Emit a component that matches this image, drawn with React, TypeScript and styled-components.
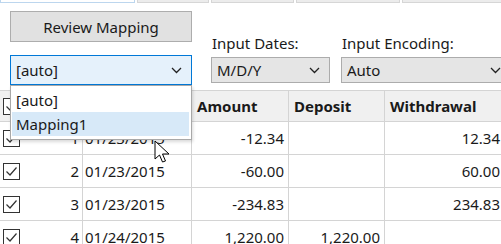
import { FC, Fragment } from "react";
import styled, { createGlobalStyle } from "styled-components";

const GlobalStyle = createGlobalStyle`
  html, body {
    margin: 0;
    padding: 0;
    background: #fff;
    overflow: hidden;
  }
  body {
    font-family: "Noto Sans", "Open Sans", "Liberation Sans", sans-serif;
    font-size: 15px;
    color: #1a1a1a;
  }
`;

const Window = styled.div`
  position: relative;
  width: 501px;
  height: 244px;
  overflow: hidden;
  background: #fff;
`;

// bottoms of the controls cut off above the visible area
const TopStrip = styled.div`
  display: flex;
  height: 4px;
`;

const StripCell = styled.div<{ $w: number; $blue?: boolean }>`
  flex: 0 0 ${(p) => p.$w}px;
  box-sizing: border-box;
  height: 3px;
  background: ${(p) => (p.$blue ? "#fff" : "#ececec")};
  border: 1px solid ${(p) => (p.$blue ? "#bcd6ee" : "#d6d6d6")};
  border-top: none;
  margin-right: 2px;
`;

const Toolbar = styled.div`
  display: flex;
  height: 86px;
  padding-left: 10px;
`;

const LeftColumn = styled.div`
  flex: 0 0 182px;
  display: flex;
  flex-direction: column;
  padding-top: 7px;
  gap: 13px;
`;

const Button = styled.div`
  box-sizing: border-box;
  height: 31px;
  display: flex;
  align-items: center;
  justify-content: center;
  background: #e1e1e1;
  border: 1px solid #adadad;
  font-size: 15px;
`;

const Combo = styled.div<{ $focused?: boolean }>`
  box-sizing: border-box;
  height: ${(p) => (p.$focused ? 30 : 26)}px;
  display: flex;
  align-items: center;
  justify-content: space-between;
  padding: 0 9px 0 5px;
  background: ${(p) => (p.$focused ? "#e5f1fb" : "#e5e5e5")};
  border: 1px solid ${(p) => (p.$focused ? "#0078d7" : "#acacac")};
  font-size: 15px;
`;

const Field = styled.div<{ $w: number; $ml: number }>`
  flex: 0 0 ${(p) => p.$w}px;
  display: flex;
  flex-direction: column;
  margin-left: ${(p) => p.$ml}px;
  padding-top: 28px;
  gap: 3px;
`;

const Label = styled.div`
  font-size: 15px;
  line-height: 22px;
  padding-left: 1px;
`;

const Grid = styled.div`
  display: grid;
  grid-template-columns: 83px 109px 97px 96px 120px;
  border-top: 1px solid #d4d4d4;
`;

const HeadCell = styled.div<{ $pl?: number }>`
  box-sizing: border-box;
  height: 31px;
  display: flex;
  align-items: center;
  padding-left: ${(p) => p.$pl ?? 5}px;
  background: #f0f0f0;
  border-right: 1px solid #d4d4d4;
  border-bottom: 1px solid #d4d4d4;
  font-weight: 700;
  font-size: 15px;
`;

const Cell = styled.div<{ $right?: boolean }>`
  box-sizing: border-box;
  height: 33px;
  display: flex;
  align-items: center;
  justify-content: ${(p) => (p.$right ? "flex-end" : "flex-start")};
  padding: 0 4px 0 2px;
  border-right: 1px solid #d4d4d4;
  border-bottom: 1px solid #d4d4d4;
  font-size: 15px;
  white-space: nowrap;
`;

const RowHead = styled(Cell)`
  justify-content: space-between;
  padding: 0 3px 0 3px;
`;

const DropList = styled.div`
  position: absolute;
  left: 10px;
  top: 85px;
  width: 182px;
  box-sizing: border-box;
  padding: 2px 2px 3px 1px;
  background: #fff;
  border: 1px solid #a8a8a8;
  box-shadow: 1px 2px 3px rgba(0, 0, 0, 0.15);
`;

const DropItem = styled.div<{ $hover?: boolean }>`
  height: 24px;
  display: flex;
  align-items: center;
  padding-left: 4px;
  background: ${(p) => (p.$hover ? "#d7e9f8" : "transparent")};
  font-size: 15px;
`;

const Cursor = styled.svg`
  position: absolute;
  left: 154px;
  top: 140px;
`;

const Chevron: FC = () => (
  <svg width="11" height="7" viewBox="0 0 11 7">
    <path d="M1 1 L5.5 5.5 L10 1" fill="none" stroke="#222" strokeWidth="1.3" />
  </svg>
);

const CheckBox: FC = () => (
  <svg width="17" height="17" viewBox="0 0 17 17">
    <rect x="0.5" y="0.5" width="16" height="16" fill="#fff" stroke="#333" />
    <path d="M3.5 8.5 L7 12 L13.5 4.5" fill="none" stroke="#333" strokeWidth="1.2" />
  </svg>
);

interface IRow {
  n: number;
  date: string;
  amount: string;
  deposit: string;
  withdrawal: string;
}

const ROWS: Array<IRow> = [
  { n: 1, date: "01/23/2015", amount: "-12.34", deposit: "", withdrawal: "12.34" },
  { n: 2, date: "01/23/2015", amount: "-60.00", deposit: "", withdrawal: "60.00" },
  { n: 3, date: "01/23/2015", amount: "-234.83", deposit: "", withdrawal: "234.83" },
  { n: 4, date: "01/24/2015", amount: "1,220.00", deposit: "1,220.00", withdrawal: "" },
];

const App: FC = () => {
  return (
    <Window>
      <GlobalStyle />
      <TopStrip>
        <StripCell $w={135} $blue />
        <StripCell $w={72} />
        <StripCell $w={83} />
        <StripCell $w={104} />
        <StripCell $w={110} />
      </TopStrip>

      <Toolbar>
        <LeftColumn>
          <Button>Review Mapping</Button>
          <Combo $focused>
            <span>[auto]</span>
            <Chevron />
          </Combo>
        </LeftColumn>
        <Field $w={119} $ml={19}>
          <Label>Input Dates:</Label>
          <Combo>
            <span>M/D/Y</span>
            <Chevron />
          </Combo>
        </Field>
        <Field $w={170} $ml={11}>
          <Label>Input Encoding:</Label>
          <Combo>
            <span>Auto</span>
            <Chevron />
          </Combo>
        </Field>
      </Toolbar>

      <Grid>
        <HeadCell $pl={3}>
          <CheckBox />
        </HeadCell>
        <HeadCell>Date</HeadCell>
        <HeadCell>Amount</HeadCell>
        <HeadCell>Deposit</HeadCell>
        <HeadCell>Withdrawal</HeadCell>

        {ROWS.map((row) => (
          <Fragment key={row.n}>
            <RowHead>
              <CheckBox />
              <span>{row.n}</span>
            </RowHead>
            <Cell>{row.date}</Cell>
            <Cell $right>{row.amount}</Cell>
            <Cell $right>{row.deposit}</Cell>
            <Cell $right>{row.withdrawal}</Cell>
          </Fragment>
        ))}
      </Grid>

      {/* open dropdown of the mapping combo */}
      <DropList>
        <DropItem>[auto]</DropItem>
        <DropItem $hover>Mapping1</DropItem>
      </DropList>

      <Cursor width="17" height="25" viewBox="0 0 17 25">
        <path
          d="M1 1 L1 19 L5.5 15 L8.5 22 L11.5 21 L8.5 14 L15 14 Z"
          fill="#fff"
          stroke="#000"
          strokeWidth="1"
          strokeLinejoin="round"
        />
      </Cursor>
    </Window>
  );
};

export default App;
